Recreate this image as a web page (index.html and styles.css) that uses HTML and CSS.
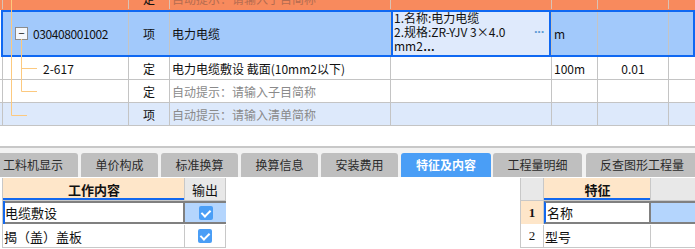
FILE: index.html
```html
<!DOCTYPE html>
<html>
<head>
<meta charset="utf-8">
<title>清单编辑</title>
<link rel="stylesheet" href="styles.css">
</head>
<body>
<div class="grid-wrap">
	<div class="grid">
		<div class="row row-orange">
			<div class="c c0"></div>
			<div class="c c-tree"></div>
			<div class="c c-type">定</div>
			<div class="c c-name hint">自动提示：请输入子目简称</div>
			<div class="c c-spec"></div>
			<div class="c c-unit"></div>
			<div class="c c-qty"></div>
			<div class="c c-rest"></div>
		</div>
		<div class="row row-sel">
			<div class="c c0"></div>
			<div class="c c-tree"><span class="toggle">−</span><span class="code">030408001002</span></div>
			<div class="c c-type">项</div>
			<div class="c c-name">电力电缆</div>
			<div class="c c-spec spec-edit">
				<div class="spec-text">1.名称:电力电缆<br>2.规格:ZR-YJV 3×4.0<br>mm2<span class="dots">…</span></div>
				<span class="more">···</span>
			</div>
			<div class="c c-unit">m</div>
			<div class="c c-qty"></div>
			<div class="c c-rest"></div>
		</div>
		<div class="row">
			<div class="c c0"></div>
			<div class="c c-tree"><span class="sub-code">2-617</span></div>
			<div class="c c-type">定</div>
			<div class="c c-name">电力电缆敷设 截面(10mm2以下)</div>
			<div class="c c-spec"></div>
			<div class="c c-unit">100m</div>
			<div class="c c-qty num">0.01</div>
			<div class="c c-rest"></div>
		</div>
		<div class="row">
			<div class="c c0"></div>
			<div class="c c-tree"></div>
			<div class="c c-type">定</div>
			<div class="c c-name hint">自动提示：请输入子目简称</div>
			<div class="c c-spec"></div>
			<div class="c c-unit"></div>
			<div class="c c-qty"></div>
			<div class="c c-rest"></div>
		</div>
		<div class="row row-light">
			<div class="c c0"></div>
			<div class="c c-tree"></div>
			<div class="c c-type">项</div>
			<div class="c c-name hint">自动提示：请输入清单简称</div>
			<div class="c c-spec"></div>
			<div class="c c-unit"></div>
			<div class="c c-qty"></div>
			<div class="c c-rest"></div>
		</div>
	</div>
	<svg class="tree-lines" width="60" height="127">
		<path d="M11.5 0V115.5H27M21.5 39V91.5H37M21.5 68.5H37" fill="none" stroke="#fcc97f" stroke-width="1"/>
	</svg>
</div>

<div class="panel">
	<div class="tabs">
		<div class="tab tab-first">工料机显示</div>
		<div class="tab">单价构成</div>
		<div class="tab">标准换算</div>
		<div class="tab">换算信息</div>
		<div class="tab">安装费用</div>
		<div class="tab tab-on">特征及内容</div>
		<div class="tab tab-w89">工程量明细</div>
		<div class="tab tab-last">反查图形工程量</div>
	</div>

	<div class="panel-body">
		<div class="work">
			<div class="t-row">
				<div class="t-cell w-name head head-focus">工作内容</div>
				<div class="t-cell w-out head head-gray">输出</div>
			</div>
			<div class="t-row t-row-sel">
				<div class="t-cell w-name">电缆敷设</div>
				<div class="t-cell w-out cell-blue"><span class="check"></span></div>
			</div>
			<div class="t-row">
				<div class="t-cell w-name">揭（盖）盖板</div>
				<div class="t-cell w-out"><span class="check"></span></div>
			</div>
		</div>

		<div class="feature">
			<div class="t-row">
				<div class="t-cell f-no head-gray"></div>
				<div class="t-cell f-name head head-focus">特征</div>
				<div class="t-cell f-val head-gray"></div>
			</div>
			<div class="t-row t-row-sel">
				<div class="t-cell f-no no-on">1</div>
				<div class="t-cell f-name">名称</div>
				<div class="t-cell f-val cell-blue"></div>
			</div>
			<div class="t-row">
				<div class="t-cell f-no">2</div>
				<div class="t-cell f-name">型号</div>
				<div class="t-cell f-val"></div>
			</div>
		</div>
	</div>
</div>
</body>
</html>
```

FILE: styles.css
```css
* { margin: 0; padding: 0; box-sizing: border-box; }

body{
	width: 695px;
	height: 249px;
	overflow: hidden;
	background: #fff;
	font-family: "Noto Sans CJK SC", sans-serif;
	font-size: 12px;
	color: #111;
}

/* top grid */
.grid-wrap{
	position: relative;
	height: 127px;
	overflow: hidden;
}
.grid{
	margin-top: -13px;
}
.row{
	display: flex;
	height: 23px;
	border-bottom: 1px solid #c4c4c4;
	background: #fff;
}
.c{
	flex-shrink: 0;
	height: 100%;
	border-right: 1px solid #c4c4c4;
	display: flex;
	align-items: center;
	white-space: nowrap;
	overflow: hidden;
}
.c0{ width: 3px; }
.c-tree{ width: 126px; }
.c-type{ width: 41px; justify-content: center; }
.c-name{ width: 221px; padding-left: 2px; }
.c-spec{ width: 161px; }
.c-unit{ width: 46px; padding-left: 2px; }
.c-qty{ width: 71px; justify-content: center; }
.c-rest{ flex: 1; border-right: none; }
.hint{ color: #8a8a8a; }

.row-orange{
	background: #f88a5d;
	border-bottom-color: #f88a5d;
}
.row-orange .c{ border-right-color: #d9c2b5; }
.row-orange .hint{ color: #b56c50; }

.row-sel{
	height: 47px;
	background: #a2c9fb;
	outline: 2px solid #0f68f2;
	outline-offset: -2px;
	margin-left: 1px;
	border-bottom: none;
}
.row-sel .c0{ width: 2px; }
.row-light{ background: #dde9fb; }

.toggle{
	width: 13px;
	height: 13px;
	margin-left: 12px;
	border: 1px solid #8c8c8c;
	background: #f4f7fc;
	font-size: 11px;
	line-height: 10px;
	text-align: center;
	color: #111;
}
.code{
	margin-left: 5px;
	letter-spacing: -0.4px;
}
.sub-code{
	margin-left: 40px;
}

.spec-edit{
	align-items: flex-start;
	background: #dfeafc;
	box-shadow: inset 0 0 0 2px #0f68f2;
	padding: 1px 0 0 3px;
}
.spec-text{
	line-height: 14px;
	font-size: 12px;
}
.dots{
	font-family: "Liberation Sans", sans-serif;
	font-weight: bold;
}
.more{
	margin: 14px 7px 0 auto;
	color: #5f9bd4;
	font-family: "Liberation Sans", sans-serif;
	font-weight: bold;
	font-size: 13px;
	line-height: 13px;
	letter-spacing: -1px;
}

.tree-lines{
	position: absolute;
	left: 0;
	top: 0;
}

/* bottom panel */
.panel{
	margin-top: 19px;
	border-top: 2px solid #c8c8c8;
	background: #f2f2f2;
	padding-top: 5px;
}
.tabs{
	display: flex;
	gap: 3px;
	margin-left: -2px;
	height: 24px;
}
.tab{
	flex-shrink: 0;
	width: 77px;
	background: #bfbfbf;
	border-radius: 3px 3px 0 0;
	color: #2b2b2b;
	font-size: 12px;
	line-height: 24px;
	text-align: center;
}
.tab-first{ width: 80px; text-align: left; padding-left: 5px; }
.tab-on{
	width: 90px;
	background: #4a9ef6;
	color: #fff;
	font-weight: bold;
}
.tab-w89{ width: 89px; margin-left: -1px; }
.tab-last{ width: 112px; margin-left: 1px; }

.panel-body{
	display: flex;
	background: #fff;
	padding: 1px 0 2px 2px;
	height: 73px;
}
.work{
	width: 224px;
	border-left: 1px solid #c8c8c8;
}
.feature{
	margin-left: auto;
	width: 175px;
	border-left: 1px solid #c8c8c8;
}
.t-row{
	display: flex;
	height: 23px;
	border-bottom: 1px solid #c8c8c8;
}
.t-cell{
	flex-shrink: 0;
	height: 100%;
	border-right: 1px solid #c8c8c8;
	display: flex;
	align-items: center;
	font-size: 13px;
	white-space: nowrap;
	padding-left: 1px;
}
.head{
	justify-content: center;
	font-weight: bold;
	background: #fee6c9;
}
.head-focus{
	box-shadow: inset 0 -2px 0 #1368ee;
}
.head-gray{
	background: #e8e8e8;
	justify-content: center;
	font-weight: normal;
}
.w-name{ width: 182px; }
.w-out{ width: 41px; justify-content: center; padding-left: 0; }
.cell-blue{ background: #b4d5fd; }

.t-row-sel{
	border-bottom: none;
	box-shadow: inset 2px 0 0 #1368ee, inset 0 2px 0 #808080, inset 0 -2px 0 #808080, inset -2px 0 0 #808080;
	height: 23px;
	margin-bottom: 1px;
}
.t-row-sel .t-cell{ border-right: none; }
.t-row-sel .cell-blue{ background: #b4d5fd; margin: 2px 2px 2px 0; height: 19px; }
.t-row-sel .w-name{ padding-left: 2px; }
.t-row-sel .w-name{ border-right: 2px solid #808080; }

.check{
	width: 14px;
	height: 14px;
	border-radius: 2px;
	background: #4a9ef6;
	position: relative;
}
.check::after{
	content: "";
	position: absolute;
	left: 4px;
	top: 2px;
	width: 4px;
	height: 7px;
	border: solid #fff;
	border-width: 0 2px 2px 0;
	transform: rotate(45deg);
}

.f-no{
	width: 23px;
	justify-content: center;
	padding-left: 0;
	font-family: "Liberation Serif", serif;
	font-size: 13px;
}
.f-name{ width: 107px; }
.f-val{ flex: 1; border-right: none; }
.no-on{
	background: #fee6c9;
	font-weight: bold;
}
.feature .t-row-sel{
	box-shadow: none;
}
.feature .t-row-sel .f-no{ border-right: 1px solid #c8c8c8; }
.feature .t-row-sel .f-name{
	border: 2px solid #808080;
	border-left: 2px solid #1368ee;
	padding-left: 1px;
}
.feature .t-row-sel .f-val{
	margin: 0;
	height: 100%;
	border-top: 2px solid #808080;
	border-bottom: 2px solid #808080;
}
```
